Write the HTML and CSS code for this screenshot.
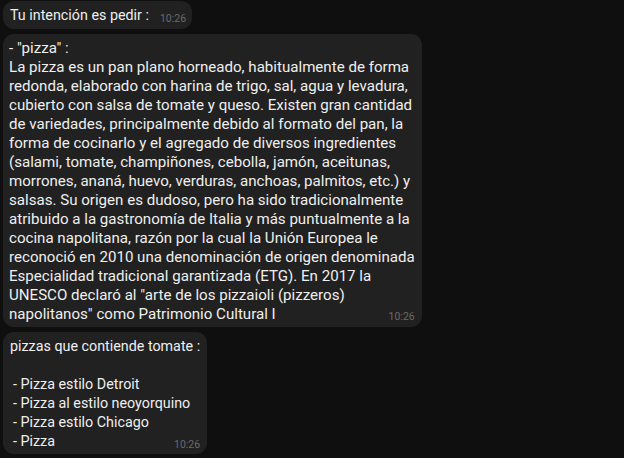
FILE: index.html
```html
<!DOCTYPE html>
<html lang="es">
<head>
<meta charset="utf-8">
<title>Chat</title>
<link rel="stylesheet" href="styles.css">
</head>
<body>
<div class="chat">
  <div class="bubble bubble-compact bubble-short">
    <div class="last-line"><span>Tu intención es pedir :</span><span class="time">10:26</span></div>
  </div>
  <div class="bubble bubble-wide">
    <div class="line">- "pizza" :</div>
    <div class="line">La pizza es un pan plano horneado, habitualmente de forma</div>
    <div class="line">redonda, elaborado con harina de trigo, sal, agua y levadura,</div>
    <div class="line">cubierto con salsa de tomate y queso. Existen gran cantidad</div>
    <div class="line">de variedades, principalmente debido al formato del pan, la</div>
    <div class="line">forma de cocinarlo y el agregado de diversos ingredientes</div>
    <div class="line">(salami, tomate, champiñones, cebolla, jamón, aceitunas,</div>
    <div class="line">morrones, ananá, huevo, verduras, anchoas, palmitos, etc.) y</div>
    <div class="line">salsas. Su origen es dudoso, pero ha sido tradicionalmente</div>
    <div class="line">atribuido a la gastronomía de Italia y más puntualmente a la</div>
    <div class="line">cocina napolitana, razón por la cual la Unión Europea le</div>
    <div class="line">reconoció en 2010 una denominación de origen denominada</div>
    <div class="line">Especialidad tradicional garantizada (ETG). En 2017 la</div>
    <div class="line">UNESCO declaró al "arte de los pizzaioli (pizzeros)</div>
    <div class="last-line"><span>napolitanos" como Patrimonio Cultural I</span><span class="time">10:26</span></div>
  </div>
  <div class="bubble bubble-compact">
    <div class="line">pizzas que contiende tomate :</div>
    <div class="line blank">&nbsp;</div>
    <div class="line indent">- Pizza estilo Detroit</div>
    <div class="line indent">- Pizza al estilo neoyorquino</div>
    <div class="line indent">- Pizza estilo Chicago</div>
    <div class="last-line"><span class="indent">- Pizza</span><span class="time">10:26</span></div>
  </div>
</div>
</body>
</html>
```

FILE: styles.css
```css
html, body {
  margin: 0;
  padding: 0;
  background: #0f0f0f;
  height: 100%;
}

body {
  font-family: Roboto, "Noto Sans", "Liberation Sans", sans-serif;
  font-size: 15px;
  line-height: 19px;
  color: #efefef;
  overflow: hidden;
}

.chat {
  display: flex;
  flex-direction: column;
  align-items: flex-start;
  gap: 5px;
  padding: 1px 0 0 3px;
}

.bubble {
  background: #212121;
  border-radius: 11px;
  padding: 5px 7px 3px 7px;
  white-space: nowrap;
}

.bubble-wide {
  font-size: 15.1px;
  padding-left: 6px;
}

.bubble-compact {
  font-size: 14.3px;
}

.bubble-short {
  padding: 5px 6px 4px 7px;
}

.last-line {
  display: flex;
  justify-content: space-between;
  align-items: flex-end;
  gap: 11px;
}

.time {
  font-size: 10.5px;
  line-height: 14px;
  color: #6a6a6a;
  position: relative;
  top: 1px;
}

.bubble-wide .time {
  top: 0;
}

.indent {
  padding-left: 3px;
}
```
